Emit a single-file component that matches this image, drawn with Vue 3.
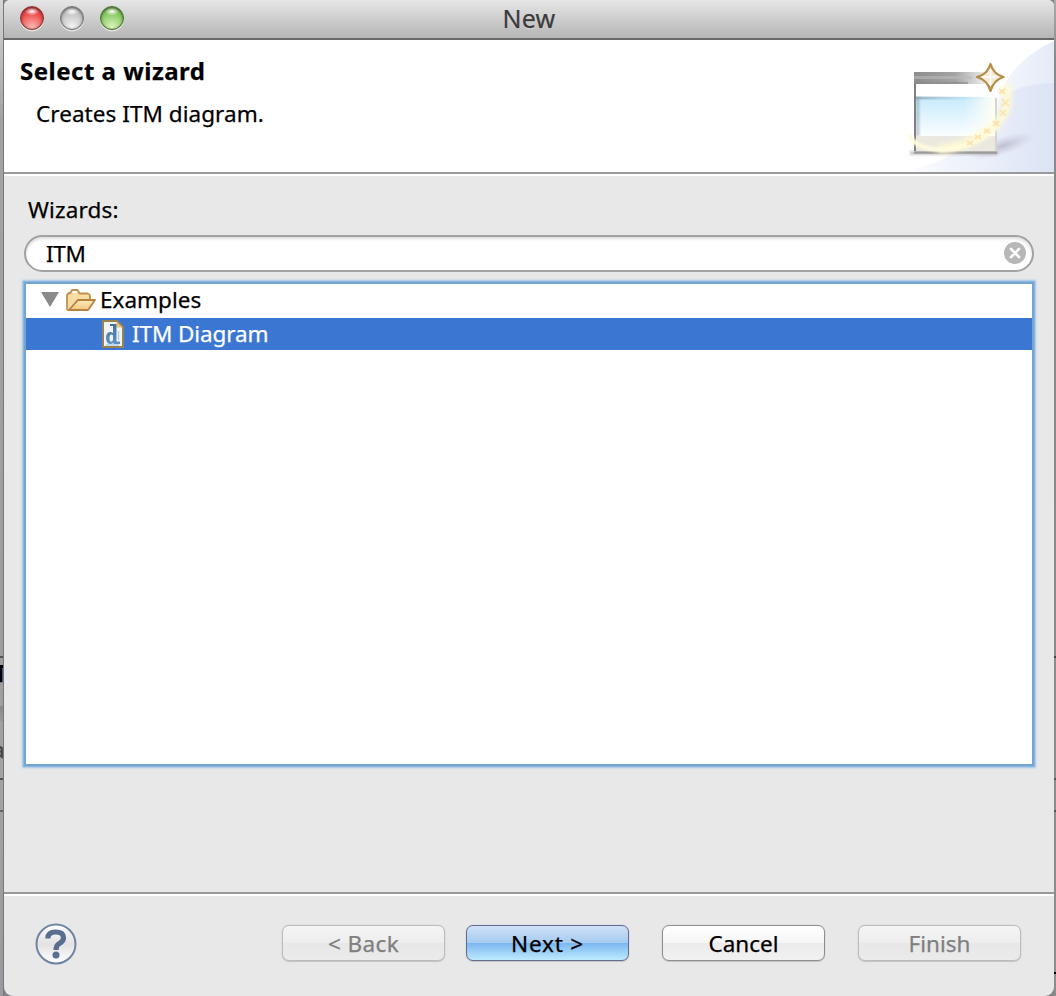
<script setup>
import { ref } from 'vue'

const query = ref('ITM')
const lights = ['red', 'gray', 'green']
const buttons = [
  { id: 'back', label: '< Back', disabled: true },
  { id: 'next', label: 'Next >', disabled: false },
  { id: 'cancel', label: 'Cancel', disabled: false },
  { id: 'finish', label: 'Finish', disabled: true },
]
</script>

<template>
  <div class="desktop">
    <div class="behind left">
      <span class="peek t">T</span>
      <span class="peek a">a</span>
    </div>
    <div class="behind right"></div>
    <main class="window">
      <header class="titlebar">
        <div class="lights">
          <i v-for="c in lights" :key="c" class="light" :class="c"></i>
        </div>
        <span class="title">New</span>
      </header>

      <section class="banner">
        <div class="banner-text">
          <h1>Select a wizard</h1>
          <p>Creates ITM diagram.</p>
        </div>
        <svg class="art" width="174" height="132" viewBox="880 40 174 132">
          <defs>
            <linearGradient id="sky" x1="0" x2="1"><stop offset="0" stop-color="#dfe6f5" stop-opacity="0" /><stop offset=".45" stop-color="#e6ecf8" stop-opacity=".6" /><stop offset="1" stop-color="#dce3f4" /></linearGradient>
            <linearGradient id="arc" x1="0" x2="1"><stop offset="0" stop-color="#fff" /><stop offset=".6" stop-color="#f6f8fd" /><stop offset="1" stop-color="#e4ebf8" /></linearGradient>
            <linearGradient id="bar" x1="0" x2="1"><stop offset="0" stop-color="#8d8d8d" /><stop offset=".5" stop-color="#a4a4a4" /><stop offset=".85" stop-color="#eee" /></linearGradient>
            <linearGradient id="pane" x1="0" y1="0" x2="0" y2="1"><stop offset="0" stop-color="#c6eafb" /><stop offset="1" stop-color="#fbfeff" /></linearGradient>
            <linearGradient id="fade" x1="0" x2="1"><stop offset=".6" stop-color="#fff" stop-opacity="0" /><stop offset="1" stop-color="#fffff4" /></linearGradient>
            <linearGradient id="edge" x1="0" x2="1"><stop offset="0" stop-color="#7f9cab" /><stop offset="1" stop-color="#b9dcea" stop-opacity="0" /></linearGradient>
            <radialGradient id="shade"><stop offset="0" stop-color="#9991ad" stop-opacity=".5" /><stop offset="1" stop-color="#aaa5bd" stop-opacity="0" /></radialGradient>
            <filter id="soft" x="-30%" y="-30%" width="160%" height="160%"><feGaussianBlur stdDeviation="2.6" /></filter>
            <filter id="soft1" x="-30%" y="-30%" width="160%" height="160%"><feGaussianBlur stdDeviation="1" /></filter>
          </defs>
          <path d="M996 110Q1004 64 1054 41V172H900Q970 158 996 110Z" fill="url(#arc)" />
          <path d="M905 172Q990 150 1002 98Q1020 83 1054 83V172Z" fill="url(#sky)" />
          <ellipse cx="1002" cy="146" rx="34" ry="9" fill="url(#shade)" transform="rotate(-18 1002 146)" />
          <rect x="910" y="151" width="88" height="4" fill="#aaa5b0" opacity=".6" filter="url(#soft1)" />
          <rect x="914" y="73" width="83" height="80" fill="#fff" />
          <rect x="914" y="72" width="83" height="12" fill="url(#bar)" />
          <rect x="914" y="76" width="58" height="3" fill="#bbb" opacity=".6" />
          <rect x="914" y="82" width="54" height="2" fill="#888" opacity=".6" />
          <rect x="916" y="97" width="79" height="39" fill="url(#pane)" />
          <rect x="916" y="97" width="79" height="39" fill="url(#fade)" />
          <rect x="916" y="96.500" width="70" height="3" fill="url(#edge)" opacity=".7" />
          <rect x="916" y="97" width="3.500" height="39" fill="#8aa5b3" opacity=".55" filter="url(#soft1)" />
          <rect x="916" y="136" width="79" height="15" fill="#ebe9df" />
          <path d="M915 84V151" stroke="#808080" stroke-width="2" />
          <path d="M914 152.500H997" stroke="#9b9b98" stroke-width="2.600" />
          <path d="M996 98V152" stroke="#b8b8b4" stroke-width="2" opacity=".6" />
          <path d="M1005 84Q1014 112 989 130Q960 150 938 149" fill="none" stroke="#fffbd4" stroke-width="9" opacity=".9" filter="url(#soft)" />
          <path d="M909 134Q914 149 943 150Q979 146 997 125" fill="none" stroke="#fffbdc" stroke-width="4.500" filter="url(#soft1)" />
          <g fill="none" stroke="#ffdfa4" stroke-width="1.700" opacity=".9">
            <path d="M999 89l6 5m0-5l-6 5M1002 99l7 7m0-7l-7 7M1000 110l6 6m0-6l-6 6M993 121l6 5m0-5l-6 5M984 129l6 4m0-4l-6 4M975 135l6 4m0-4l-6 4M967 141l6 4m0-4l-6 4" />
          </g>
          <path d="M990.500 64Q993.500 74.500 1003.500 77Q993.500 80 990.500 91Q987.500 80 977 77Q987.500 74.500 990.500 64Z" fill="#f5ebd6" stroke="#b58f48" stroke-width="2.300" stroke-linejoin="round" />
          <path d="M990.500 69V85M982 77H999" stroke="#fff" stroke-width="1.500" />
        </svg>
      </section>

      <section class="content">
        <label class="caption" for="filter">Wizards:</label>
        <div class="search">
          <input id="filter" v-model="query" type="text" />
          <svg width="22" height="22" viewBox="0 0 22 22">
            <circle cx="11" cy="11" r="11" fill="#b7b7b7" />
            <path d="M7 7L15 15M15 7L7 15" stroke="#fff" stroke-width="2.600" stroke-linecap="round" />
          </svg>
        </div>

        <div class="tree">
          <div class="row parent">
            <svg class="arrow" width="18" height="15" viewBox="0 0 18 15"><path d="M0 0H18L9 15Z" fill="#8a8a8a" /></svg>
            <svg class="folder" width="30" height="22" viewBox="0 0 30 22">
              <defs><linearGradient id="fold" x1="0" y1="0" x2="0" y2="1"><stop offset="0" stop-color="#fdebbb" /><stop offset="1" stop-color="#f0c983" /></linearGradient></defs>
              <path d="M1 20V6L3 4H4.500L6 1H11.500L13.500 4.500H22Q24 5 24 7V11H12L4 21H2Z" fill="#f6dca2" stroke="#bf904f" stroke-width="1.800" stroke-linejoin="round" />
              <path d="M6.500 3H11" stroke="#fff" stroke-width="2" />
              <path d="M3 21L12 11H29L22.500 20.500Q22 21 21 21Z" fill="url(#fold)" stroke="#b98140" stroke-width="1.800" stroke-linejoin="round" />
            </svg>
            <span class="examples">Examples</span>
          </div>
          <div class="row selected">
            <svg class="doc" width="22" height="28" viewBox="0 0 22 28">
              <defs><linearGradient id="dk" x1="0" y1="0" x2="0" y2="1"><stop offset="0" stop-color="#44719b" /><stop offset="1" stop-color="#5f93c4" /></linearGradient></defs>
              <path d="M1 1H15L21 7V27H1Z" fill="#eef4f8" stroke="#988252" stroke-width="2" />
              <path d="M14.500 1.500L20.500 7.500H14.500Z" fill="#e5c078" />
              <path d="M8 4H14.500V21.500H18V24H11.500V22.500Q10 24.500 7.500 24Q4 23 4 18Q4 12.500 8 12Q10 12 11 13V6H8Z M11 15.500Q9.500 14 8.300 15Q7.300 16.200 7.500 19Q7.700 21.500 9 21.700Q10.500 21.500 11 20Z" fill="url(#dk)" fill-rule="evenodd" />
              <path d="M4 25H17M16.500 11V20" stroke="#b7d0e4" stroke-width="1.500" />
            </svg>
            <span class="diagram">ITM Diagram</span>
          </div>
        </div>
      </section>

      <footer class="footer">
        <svg class="help" width="42" height="42" viewBox="0 0 42 42">
          <defs><linearGradient id="hb" x1="0" y1="0" x2="0" y2="1"><stop offset="0" stop-color="#fff" /><stop offset=".5" stop-color="#e2e2e2" /><stop offset="1" stop-color="#fff" /></linearGradient></defs>
          <circle cx="21" cy="21" r="19.500" fill="url(#hb)" stroke="#6f83a2" stroke-width="2" />
          <path d="M12.800 15.500Q13 9 20.500 9Q28.500 9 28.500 14.800Q28.500 18.500 24.300 20.500Q21 22.200 21 27" fill="none" stroke="#5a6e91" stroke-width="5.200" />
          <circle cx="21" cy="32" r="3.500" fill="#5a6e91" />
        </svg>
        <div class="buttons">
          <button v-for="b in buttons" :key="b.id" :class="b.id" :disabled="b.disabled"><span>{{ b.label }}</span></button>
        </div>
      </footer>
    </main>
  </div>
</template>

<style>
body { margin: 0; overflow: hidden; }
</style>

<style scoped>
.desktop {
  position: relative;
  box-sizing: border-box;
  width: 1056px;
  height: 996px;
  padding: 0 2px 0 4px;
  overflow: hidden;
  background: #858585;
  font-family: "Noto Sans", "Open Sans", sans-serif;
  font-size: 22.5px;
  color: #000;
  -webkit-text-stroke: 0.25px currentColor;
}
.behind { position: absolute; top: 0; bottom: 0; overflow: hidden; }
.left {
  left: 0;
  width: 4px;
  background:
    linear-gradient(#555, #555) 0 656px / 4px 2px no-repeat,
    linear-gradient(#888, #999) 0 706px / 4px 15px no-repeat,
    linear-gradient(#555, #555) 0 778px / 4px 2px no-repeat,
    linear-gradient(#666, #666) 0 810px / 4px 2px no-repeat,
    linear-gradient(#d5d5d5, #a3a3a3 120px, #9d9d9d 650px, #a3a3a3 780px, #989a9f);
  border-right: 1px solid #777;
  box-sizing: border-box;
}
.right {
  right: 0;
  width: 2px;
  background:
    linear-gradient(#444, #444) 0 656px / 2px 2px no-repeat,
    linear-gradient(#555, #555) 0 778px / 2px 2px no-repeat,
    linear-gradient(#555, #555) 0 810px / 2px 2px no-repeat,
    linear-gradient(#000, #000) 0 972px / 2px 2px no-repeat,
    linear-gradient(#aaa, #888 60px, #8c8c8c);
}
.peek { position: absolute; line-height: 26px; }
.t { top: 661px; left: -6px; font-weight: 700; }
.a { top: 737px; left: -8px; color: #444; }

.window {
  display: flex;
  flex-direction: column;
  width: 1050px;
  height: 996px;
  overflow: hidden;
  background: #e8e8e8;
  border-radius: 6px 6px 9px 9px;
}
.titlebar {
  position: relative;
  box-sizing: border-box;
  flex: none;
  height: 40px;
  display: flex;
  align-items: flex-start;
  justify-content: center;
  border-bottom: 2px solid #686868;
  background: linear-gradient(#e6e6e6, #b5b5b5);
}
.title {
  font-size: 25px;
  line-height: 36px;
  letter-spacing: 0.2px;
  color: #3a3a3a;
  text-shadow: 0 1px 0 #e5e5e5;
}
.lights { position: absolute; left: 16px; top: 6px; display: flex; gap: 16px; }
.light {
  box-sizing: border-box;
  width: 24px;
  height: 24px;
  border-radius: 50%;
  border: 1.5px solid;
  box-shadow: 0 1.5px 0 #e2e2e2, inset 0 1px 3px #0008;
}
.red {
  border-color: #8a3330;
  background: radial-gradient(ellipse 7px 4px at 50% 20%, #fff, #fff0), radial-gradient(circle at 50% 92%, #fbb9b9, #ee4f4d 60%, #d94242);
}
.gray {
  border-color: #747474;
  background: radial-gradient(ellipse 7px 4px at 50% 20%, #fff, #fff0), radial-gradient(circle at 50% 90%, #f3f3f3, #c6c6c6 60%, #b6b6b6);
}
.green {
  border-color: #45702f;
  background: radial-gradient(ellipse 7px 4px at 50% 20%, #fff, #fff0), radial-gradient(circle at 50% 92%, #dcf6c0, #8acb66 60%, #6fb04c);
}

.banner {
  flex: none;
  display: flex;
  justify-content: space-between;
  height: 132px;
  background: #fff;
  border-bottom: 2px solid #999;
}
.banner-text { padding: 15px 0 0 16px; }
h1 { margin: 0; font-size: 24px; line-height: 32px; font-weight: 700; letter-spacing: 0.5px; white-space: nowrap; }
p { margin: 12px 0 0 16px; line-height: 30px; letter-spacing: 0.05px; white-space: nowrap; }

.content {
  flex: none;
  box-sizing: border-box;
  height: 718px;
  padding: 18px 20px 0 20px;
  border-top: 2px solid #fff;
}
.caption { display: block; height: 32px; margin: 0 0 9px 4px; line-height: 31px; letter-spacing: 0.15px; }
.search {
  box-sizing: border-box;
  display: flex;
  align-items: center;
  width: 1010px;
  height: 37px;
  padding: 0 6px 1px 20px;
  border: 2px solid #a2a2a2;
  border-radius: 19px;
  background: #fff;
  box-shadow: inset 0 2px 3px #0002;
}
input {
  flex: 1;
  min-width: 0;
  padding: 1px 0 0;
  border: 0;
  outline: 0;
  background: transparent;
  font: inherit;
  line-height: 30px;
  letter-spacing: -0.3px;
  color: #000;
}
.tree {
  width: 1006px;
  height: 480px;
  margin: 12px 0 0 2px;
  background: #fff;
  box-shadow: 0 0 0 2px #72a5d3, 0 0 1px 3px #8bb7de, 0 0 2px 4px #a9c9e5;
}
.row { display: flex; align-items: center; line-height: 32px; height: 32px; white-space: nowrap; }
.parent { padding: 0 0 2px 15px; }
.arrow { margin: 0 7px 1px 0; }
.folder { margin-right: 4px; }
.selected { padding-left: 76px; color: #fff; background: #3c76d3; }
.diagram { letter-spacing: -0.1px; }
.doc { margin-right: 8px; }

.footer {
  flex: none;
  box-sizing: border-box;
  height: 104px;
  display: flex;
  align-items: flex-start;
  justify-content: space-between;
  padding: 29px 33px 0 31px;
  border-top: 2px solid #999;
  box-shadow: inset 0 2px 0 #fff;
}
.buttons { display: flex; gap: 33px; padding-top: 2px; }
.back { margin-right: -12px; }
button {
  box-sizing: border-box;
  width: 163px;
  height: 36px;
  padding: 2px 0 0;
  border: 1.5px solid #8e8e8e;
  border-radius: 7px;
  font: inherit;
  line-height: 30px;
  color: #000;
  background: linear-gradient(#fff, #f5f5f5 50%, #ebebeb 50%, #f1f1f1);
  box-shadow: 0 0 1px #0004, 0 1px 1px #0002;
  -webkit-text-stroke: inherit;
}
button:disabled { color: #7f7f7f; border-color: #bcbcbc; background: linear-gradient(#f5f5f5, #ededed 50%, #e7e7e7 50%, #ebebeb); }
.back { letter-spacing: 0.4px; }
.next { letter-spacing: 0.8px; border-color: #626b91; background: linear-gradient(#cfe1f7, #a7cbf2 49%, #7ab6ef 50%, #bdeafd); }
</style>
